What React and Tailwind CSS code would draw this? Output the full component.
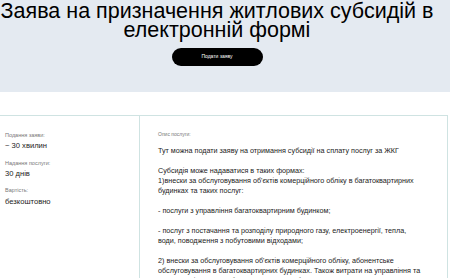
export default function App() {
  return (
    <div className="w-[450px] h-[278px] overflow-hidden bg-white" style={{ fontFamily: '"Liberation Sans", Arial, sans-serif' }}>
      <div className="h-[92px] bg-[#e4eaf1] flex flex-col items-center pr-[16px] pt-[2px]">
        <h1 className="text-[21.5px] leading-[19px] text-center text-black font-normal w-[434px]">
          Заява на призначення житлових субсидій в електронній формі
        </h1>
        <button className="mt-[8px] w-[91px] h-[18px] rounded-full bg-black text-white text-[5px] flex items-center justify-center">
          Подати заяву
        </button>
      </div>
      <div className="h-[23px]" />
      <div className="flex border-t border-[#cfe3e2] w-[448px]">
        <div className="w-[140px] border-r border-[#cfe3e2] pl-[5px] pt-[15px] text-[5.5px]">
          <div className="text-[#777]">Подання заяви:</div>
          <div className="text-[7.6px] text-[#222] mt-[1px]">~ 30 хвилин</div>
          <div className="text-[#777] mt-[7px]">Надання послуги:</div>
          <div className="text-[7.6px] text-[#222] mt-[1px]">30 днів</div>
          <div className="text-[#777] mt-[7px]">Вартість:</div>
          <div className="text-[7.6px] text-[#222] mt-[1px]">безкоштовно</div>
        </div>
        <div className="flex-1 border-r border-[#cfe3e2] pl-[18px] pr-[24px] pt-[15px]">
          <div className="text-[5px] text-[#777]">Опис послуги:</div>
          <div className="mt-[7px] text-[7.2px] leading-[10px] text-[#222]">
            <p>Тут можна подати заяву на отримання субсидії на сплату послуг за ЖКГ</p>
            <p className="mt-[10px]">Субсидія може надаватися в таких формах:</p>
            <p>1)внески за обслуговування об'єктів комерційного обліку в багатоквартирних будинках та таких послуг:</p>
            <p className="mt-[10px]">- послуги з управління багатоквартирним будинком;</p>
            <p className="mt-[10px]">- послуг з постачання та розподілу природного газу, електроенергії, тепла, води, поводження з побутовими відходами;</p>
            <p className="mt-[10px]">2) внески за обслуговування об'єктів комерційного обліку, абонентське обслуговування в багатоквартирних будинках. Також витрати на управління та комунальні послуги в багатоквартирному будинку з ОСББ чи кооперативом;</p>
          </div>
        </div>
      </div>
    </div>
  );
}
